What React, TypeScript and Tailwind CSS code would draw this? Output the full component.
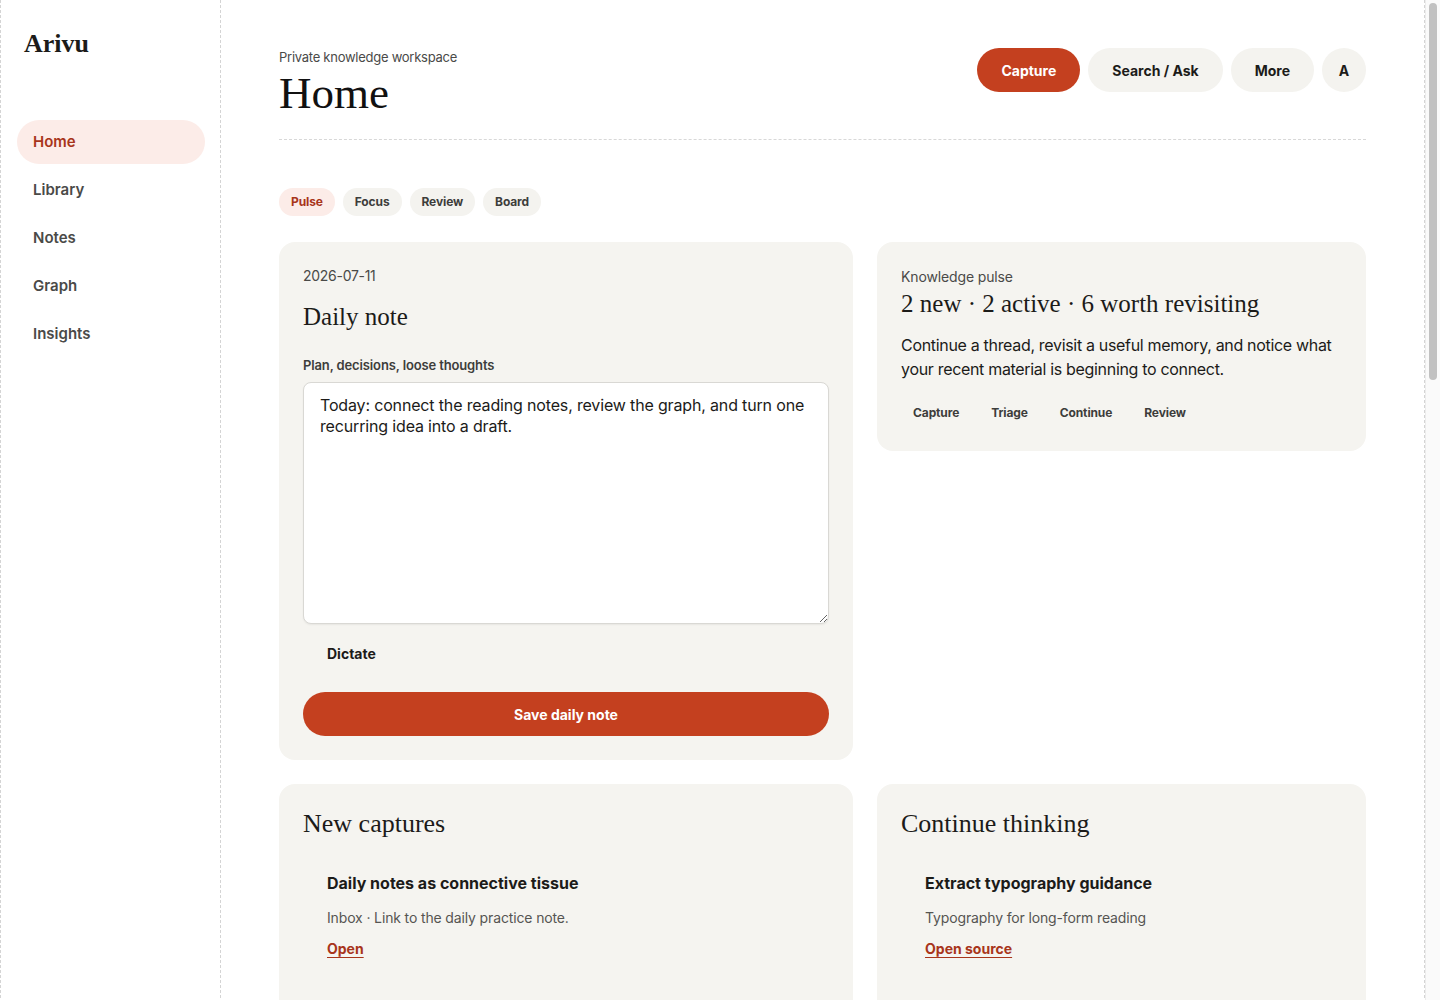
import React, { useState } from "react";

const sans = "font-['Inter','Liberation_Sans',sans-serif]";
const serif = "font-['Liberation_Serif','DejaVu_Serif',serif]";

const navItems = ["Home", "Library", "Notes", "Graph", "Insights"];
const views = ["Pulse", "Focus", "Review", "Board"];
const pulseActions = ["Capture", "Triage", "Continue", "Review"];

const Sidebar = ({ active }: { active: string }) => {
  return (
    <aside className="w-[220px] shrink-0 border-r border-dashed border-[#d4d4d4] pl-4 pr-[15px] pt-[28px]">
      <div className={`${serif} px-[7px] text-[26px] font-bold leading-[32px] text-[#1c1b19]`}>
        Arivu
      </div>
      <nav className="mt-[60px] flex flex-col gap-1">
        {navItems.map((item) => (
          <a
            key={item}
            href="#"
            className={`flex h-11 items-center rounded-full px-4 text-[15px] font-semibold ${
              item === active
                ? "bg-[#fcece8] text-[#a8351b]"
                : "text-[#4a4a48]"
            }`}
          >
            {item}
          </a>
        ))}
      </nav>
    </aside>
  );
};

const Header = () => {
  return (
    <header className="flex items-start justify-between border-b border-dashed border-[#d8d8d8] pb-[21px]">
      <div>
        <p className="text-[13px] leading-[18px] tracking-[-0.02em] text-[#4a4a48]">
          Private knowledge workspace
        </p>
        <h1 className={`${serif} mt-[3px] text-[45px] leading-[49px] text-[#111]`}>
          Home
        </h1>
      </div>
      <div className="flex items-center gap-2">
        <button className="h-11 rounded-full bg-[#c4401f] px-6 text-[14px] font-bold text-white">
          Capture
        </button>
        <button className="h-11 rounded-full bg-[#f4f3ef] px-6 text-[14px] font-bold text-[#1c1b19]">
          Search / Ask
        </button>
        <button className="h-11 rounded-full bg-[#f4f3ef] px-6 text-[14px] font-bold text-[#1c1b19]">
          More
        </button>
        <button className="h-11 w-11 rounded-full bg-[#f4f3ef] text-[14px] font-bold text-[#1c1b19]">
          A
        </button>
      </div>
    </header>
  );
};

const DailyNote = () => {
  const [text, setText] = useState(
    "Today: connect the reading notes, review the graph, and turn one recurring idea into a draft."
  );
  return (
    <section className="rounded-2xl bg-[#f5f4f0] p-6">
      <p className="text-[14px] leading-5 tracking-[-0.02em] text-[#4a4a48]">2026-07-11</p>
      <h2 className={`${serif} mt-[15px] text-[25px] leading-[31px] text-[#1c1b19]`}>
        Daily note
      </h2>
      <label className="mt-6 block text-[13px] font-semibold leading-[18px] tracking-[-0.01em] text-[#3d3d3b]">
        Plan, decisions, loose thoughts
      </label>
      <textarea
        value={text}
        onChange={(e) => setText(e.target.value)}
        className={`${sans} mt-2 block h-[242px] w-full rounded-lg border border-[#d9d8d4] bg-white px-4 py-3 text-[16px] leading-[21px] tracking-[-0.01em] text-[#1c1b19] shadow-[0_1px_2px_rgba(0,0,0,0.06)] outline-none`}
      />
      <button className="mt-[7px] h-11 px-6 text-[14px] font-bold text-[#1c1b19]">
        Dictate
      </button>
      <button className="mt-[17px] block h-11 w-full rounded-full bg-[#c4401f] text-[14px] font-bold text-white">
        Save daily note
      </button>
    </section>
  );
};

const KnowledgePulse = () => {
  return (
    <section className="rounded-2xl bg-[#f5f4f0] p-6 pb-[22px]">
      <p className="mt-px text-[14px] leading-5 tracking-[-0.01em] text-[#4a4a48]">Knowledge pulse</p>
      <h2 className={`${serif} mt-[1px] text-[25px] leading-[31px] text-[#1c1b19]`}>
        2 new · 2 active · 6 worth revisiting
      </h2>
      <p className="mt-[14px] text-[16px] leading-6 tracking-[-0.02em] text-[#1c1b19]">
        Continue a thread, revisit a useful memory, and notice what your
        recent material is beginning to connect.
      </p>
      <div className="mt-[16px] flex gap-2">
        {pulseActions.map((a) => (
          <button
            key={a}
            className="h-8 px-3 text-[12px] font-bold tracking-[-0.01em] text-[#3d3d3b]"
          >
            {a}
          </button>
        ))}
      </div>
    </section>
  );
};

type Item = { title: string; meta: string; link: string };

const ListCard = ({ title, items }: { title: string; items: Item[] }) => {
  return (
    <section className="rounded-2xl bg-[#f5f4f0] p-6 pb-10">
      <h2 className={`${serif} text-[26px] leading-[31px] text-[#1c1b19]`}>
        {title}
      </h2>
      <ul className="mt-2 flex flex-col gap-2">
        {items.map((it) => (
          <li key={it.title} className="rounded-xl p-6">
            <h3 className="text-[16px] font-bold leading-6 text-[#1c1b19]">
              {it.title}
            </h3>
            <p className="mt-[13px] text-[14px] leading-5 tracking-[-0.01em] text-[#555552]">
              {it.meta}
            </p>
            <a
              href="#"
              className="mt-[11px] inline-block text-[14px] font-bold leading-5 text-[#a8351b] underline underline-offset-[3px]"
            >
              {it.link}
            </a>
          </li>
        ))}
      </ul>
    </section>
  );
};

const ScrollRail = () => (
  <div
    aria-hidden
    className="w-[15px] shrink-0 border-l border-[#ececec] bg-[#fafafa] px-[3px] pt-[3px]"
  >
    <div className="h-[377px] rounded-full bg-[#c1c1c1]" />
  </div>
);

export default function App() {
  return (
    <div className={`${sans} flex h-screen bg-white text-[#1c1b19]`}>
      <div className="min-w-0 flex-1 overflow-y-auto [scrollbar-width:none]">
        <div className="flex min-h-screen border-x border-dashed border-[#d4d4d4]">
          <Sidebar active="Home" />
          <main className="min-w-0 flex-1 px-[58px] pb-16 pt-12">
            <Header />
            <div className="mt-12 flex gap-2">
              {views.map((v) => (
                <button
                  key={v}
                  className={`h-7 rounded-full px-3 text-[12px] font-bold tracking-[-0.01em] ${
                    v === "Pulse"
                      ? "bg-[#fcece8] text-[#a8351b]"
                      : "bg-[#f4f3ef] text-[#3d3d3b]"
                  }`}
                >
                  {v}
                </button>
              ))}
            </div>
            <div className="mt-[26px] grid grid-cols-[minmax(0,1.174fr)_minmax(0,1fr)] items-start gap-6">
              <DailyNote />
              <KnowledgePulse />
              <ListCard
                title="New captures"
                items={[
                  {
                    title: "Daily notes as connective tissue",
                    meta: "Inbox · Link to the daily practice note.",
                    link: "Open",
                  },
                ]}
              />
              <ListCard
                title="Continue thinking"
                items={[
                  {
                    title: "Extract typography guidance",
                    meta: "Typography for long-form reading",
                    link: "Open source",
                  },
                ]}
              />
            </div>
          </main>
        </div>
      </div>
      <ScrollRail />
    </div>
  );
}
